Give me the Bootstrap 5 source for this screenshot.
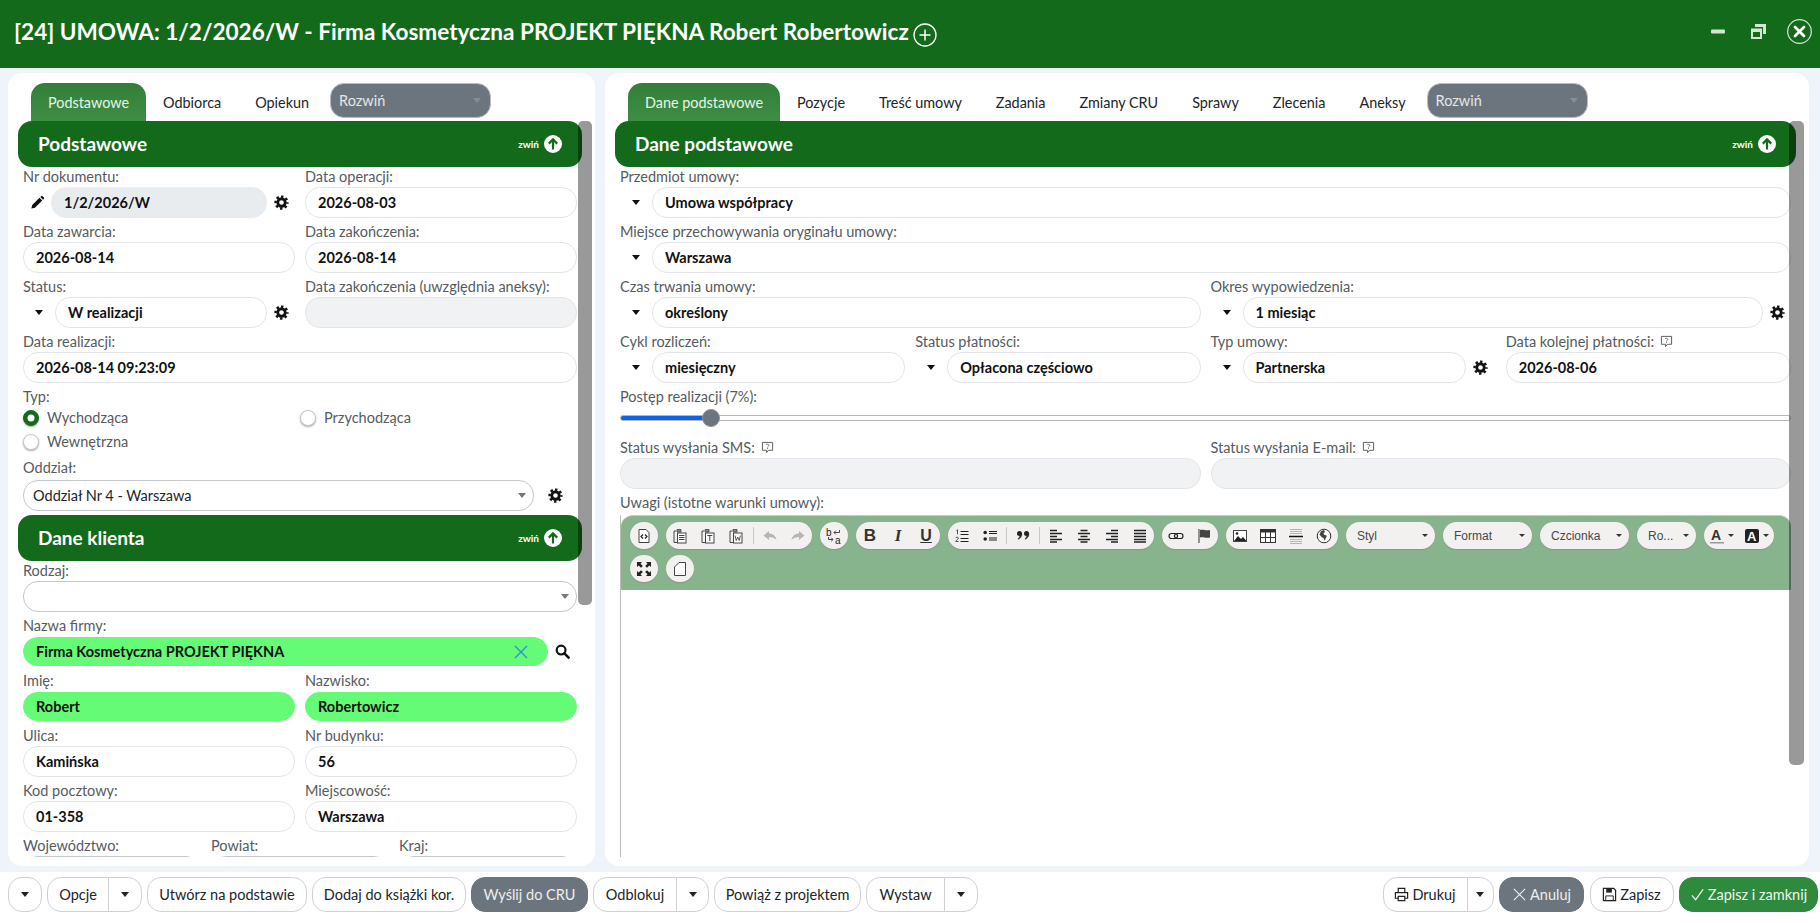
<!DOCTYPE html>
<html lang="pl">
<head>
  <meta charset="UTF-8">
  <title>Umowa 1/2/2026/W</title>
  <link href="https://cdn.jsdelivr.net/npm/bootstrap@5.3.3/dist/css/bootstrap.min.css" rel="stylesheet">
  <style>
    html, body { height: 100%; }
    body {
      font-family: "Lato", "Noto Sans", sans-serif;
      font-size: 14.5px;
      background: #eff4fa;
      color: #212529;
      overflow: hidden;
    }
    .app-shell { height: 923px; }

    /* naglowek okna */
    .win-head { height: 68px; background: #136a1b; color: #fff; padding: 0 8px 0 14px; }
    .win-title { font-size: 22.55px; font-weight: 700; margin: 0 0 4px; line-height: 1; }
    .win-add { width: 24px; height: 24px; margin-left: 4px; margin-top: 1px; }
    .win-ctl { color: #d5e6d6; margin-bottom: 6px; }
    .win-gap-a { margin-left: 26px; }
    .win-gap-b { margin-left: 21px; }

    /* panele */
    .work-area { height: 804px; padding: 5px 11px 6px 8px; gap: 10px; }
    .side-panel { background: #fff; border-radius: 14px; padding: 10px 13px 9px 10px; position: relative; min-width: 0; }
    .panel-left { width: 587px; flex: none; }
    .panel-right { flex: 1 1 auto; }
    .fake-scroll { position: absolute; top: 48px; width: 14px; right: 3px; background: rgba(0,0,0,.4); border-radius: 5px; z-index: 3; }
    .panel-left .fake-scroll { height: 484px; }
    .panel-right .fake-scroll { height: 644px; right: 5px; width: 15px; }

    .tab-strip { height: 38px; flex: none; border: 0; padding-left: 13px; flex-wrap: nowrap; font-size: 14.4px; }
    .tab-strip .nav-link { color: #212529; border: 0; padding: 0 17px; height: 38px; line-height: 40px; border-radius: 14px 14px 0 0; }
    .tab-strip .nav-link.active { background: linear-gradient(#337f39, #3f8d45); color: #e9f3ea; }
    .tab-more {
      width: 161px; height: 35px; margin-left: 4px; border-radius: 14px; background-color: #6c757d; color: #e4e6e8;
      border: 1px solid #b9bcc0; padding: 0 8px; font-size: 14.5px; line-height: 28px;
      background-image: url("data:image/svg+xml,%3csvg xmlns='http://www.w3.org/2000/svg' viewBox='0 0 8 5'%3e%3cpath fill='%23868c92' d='M0 0h8L4 5z'/%3e%3c/svg%3e");
      background-size: 8px 5px; background-position: right 9px center;
    }
    .panel-body { min-height: 0; overflow: hidden; }

    .sect-head { height: 46px; flex: none; background: #136a1b; color: #fff; border-radius: 14px; padding: 0 20px; }
    .sect-head h2 { font-size: 19px; font-weight: 700; margin: 0; }
    .sect-fold { font-size: 10px; font-weight: 700; }
    .sect-fold svg { width: 18px; height: 18px; margin-left: 5px; }

    /* pola */
    .form-pad { padding: 0 5px; }
    .frm-row { --bs-gutter-x: 10px; --bs-gutter-y: 4px; }
    .fld-lbl { display: block; height: 20px; line-height: 20px; margin: 0; color: #555b60; white-space: nowrap; }
    .fld-lbl svg { width: 13px; height: 13px; margin-left: 2px; vertical-align: -1px; }
    .fld-in {
      height: 31px; min-height: 0; border-radius: 15px; border-color: #e3e5e8; font-weight: 700; color: #111;
      font-size: 14.5px; padding: 0 12px; min-width: 0;
    }
    .fld-in:disabled { background: #f1f2f4; }
    .fld-in.is-locked { background: #e9ecef; border-color: #e9ecef; }
    .fld-in.is-hit { background: #65fb76; border-color: #65fb76; height: 29px; margin: 1px 0; }
    .fld-sel {
      height: 31px; border-radius: 15px; border-color: #c4c7ca; font-size: 14.5px; color: #212529; padding: 0 20px 0 9px;
      background-image: url("data:image/svg+xml,%3csvg xmlns='http://www.w3.org/2000/svg' viewBox='0 0 8 5'%3e%3cpath fill='%23777' d='M0 0h8L4 5z'/%3e%3c/svg%3e");
      background-size: 8px 5px; background-position: right 7px center;
    }
    .pre-btn { width: 32px; flex: none; display: flex; justify-content: center; color: #111; }
    .pre-short { width: 28px; }
    .post-btn { width: 28px; flex: none; display: flex; justify-content: center; color: #111; }
    .post-30 { width: 30px; }
    .post-wide { width: 43px; }
    .post-wide.is-search { width: 29px; }
    .tri { width: 0; height: 0; border-left: 4px solid transparent; border-right: 4px solid transparent; border-top: 5px solid currentColor; }
    .ico-15 { width: 15px; height: 15px; }
    .hit-wrap { position: relative; flex: 1 1 auto; min-width: 0; }
    .hit-x { position: absolute; right: 20px; top: 9px; width: 14px; height: 14px; }

    .radio-wrap { margin-top: -1px; }
    .radio-row { color: #555b60; height: 24px; margin: 0; padding-left: 24px; min-height: 0; line-height: 24px; }
    .radio-row .form-check-input { width: 16px; height: 16px; margin: 4px 0 0 -24px; border: 1px solid #c8c8c8; box-shadow: 0 1px 2px #aaa; }
    .radio-row .form-check-input:checked { background-color: #136a1b; border-color: #136a1b; }
    .sel-drop { margin-top: 2px; }

    .range-box { height: 27px; padding-top: 1px; }
    .prog-range { height: 20px; display: block; }
    .prog-range::-webkit-slider-runnable-track { height: 6px; border: 1px solid #b5b5b5; border-radius: 3px; background: linear-gradient(90deg, #0d62e0 7.6%, #fff 7.6%); }
    .prog-range::-webkit-slider-thumb { width: 18px; height: 18px; margin-top: -7px; background: #6c757d; border: 1px solid #8b9197; }

    /* edytor */
    .editor-box { margin-top: 2px; border-left: 1px solid #bbb; flex: 1 1 auto; min-height: 0; }
    .ed-bar {
      background: #88b48d; border-top: 1px solid #c9c9c9; border-top-right-radius: 12px; border-top-left-radius: 12px;
      height: 75px; padding: 6px 9px; gap: 6px 8px;
    }
    .tb-grp { height: 27px; background: #f2f1f0; border-radius: 14px; box-shadow: 0 1px 1px #8b948c; color: #333; }
    .tb-btn { width: 28px; height: 27px; display: flex; align-items: center; justify-content: center; }
    .tb-btn svg { width: 16px; height: 16px; }
    .tb-sep { width: 1px; height: 17px; background: #c8c8c8; margin: 0 2.5px; }
    .tb-sep-sm { margin: 0 2px; }
    .tb-tx { font-family: "Liberation Sans", Arial, sans-serif; font-weight: 700; font-size: 17px; }
    .tb-serif { font-family: "Liberation Serif", serif; font-style: italic; font-size: 17px; }
    .tb-u { text-decoration: underline; font-size: 16px; }
    .tb-combo { height: 27px; background: #f2f1f0; border-radius: 14px; box-shadow: 0 1px 1px #8b948c; font-family: "Liberation Sans", Arial, sans-serif; font-size: 12px; color: #484848; padding: 0 7px 0 11px; }
    .combo-wide { width: 89px; }
    .combo-narrow { width: 59px; }
    .tb-combo .tri { border-left-width: 3px; border-right-width: 3px; border-top-width: 3px; color: #333; }
    .tb-color { width: 35px; height: 27px; display: flex; align-items: center; justify-content: center; gap: 3px; }
    .tb-color svg { width: 16px; height: 16px; }
    .tb-color .tri { border-left-width: 3px; border-right-width: 3px; border-top-width: 3px; }

    /* stopka */
    .foot-bar { height: 51px; background: #fff; padding: 5px 2px 0 8px; gap: 5px; }
    .foot-right { gap: 5.5px; }
    .foot-btn {
      height: 35px; border-radius: 14px; background: #fff; border: 1px solid #cfd1d3; color: #212529;
      font-size: 14.5px; padding: 0; display: inline-flex; align-items: center; justify-content: center; flex: none;
    }
    .foot-btn svg { width: 15px; height: 15px; margin-right: 3px; }
    .foot-grp { flex: none; }
    .foot-grp .foot-btn:first-child { border-radius: 14px 0 0 14px; }
    .foot-grp .foot-btn:last-child { border-radius: 0 14px 14px 0; }
    .foot-btn.is-gray { background: #6c757d; border-color: #6c757d; color: #eceeef; }
    .foot-btn.is-green { background: #2e8a3c; border-color: #2e8a3c; color: #eef6ef; }
    .w-34 { width: 34px; } .w-33 { width: 33px; } .w-27 { width: 27px; }
    .w-62 { width: 62px; } .w-84 { width: 84px; } .w-79 { width: 79px; } .w-85 { width: 85px; }
    .w-160 { width: 160px; } .w-154 { width: 154px; } .w-117 { width: 117px; } .w-147 { width: 147px; }
    .w-139 { width: 139px; }
  </style>
</head>
<body>

  <!-- ikony -->
  <svg width="0" height="0" class="position-absolute">
    <symbol id="i-gear" viewBox="0 0 16 16">
      <circle cx="8" cy="8" r="6.300" fill="none" stroke="currentColor" stroke-width="2.600" stroke-dasharray="2.600 2.350" stroke-dashoffset="1.300"/>
      <circle cx="8" cy="8" r="4" fill="none" stroke="currentColor" stroke-width="3"/>
    </symbol>
    <symbol id="i-pencil" viewBox="0 0 16 16">
      <path fill="currentColor" d="M1.500 14.500l.9-3.800 7.700-7.700 2.900 2.900-7.700 7.700z"/>
      <path fill="currentColor" d="M11 2.100l.9-.9a1.100 1.100 0 0 1 1.500 0l1.400 1.400a1.100 1.100 0 0 1 0 1.500l-.9.9z"/>
    </symbol>
    <symbol id="i-search" viewBox="0 0 16 16">
      <circle cx="6.500" cy="6.500" r="4.700" fill="none" stroke="currentColor" stroke-width="2.300"/>
      <path d="M10 10l4.500 4.500" stroke="currentColor" stroke-width="2.800" stroke-linecap="round"/>
    </symbol>
    <symbol id="i-up" viewBox="0 0 18 18">
      <circle cx="9" cy="9" r="9" fill="#fff"/>
      <path d="M9 14.500V4.500M4.800 8.600L9 4.400l4.200 4.200" fill="none" stroke="#136a1b" stroke-width="2.200"/>
    </symbol>
    <symbol id="i-note" viewBox="0 0 14 14">
      <path d="M1.500 1.500h11v8.500H8L6 12.500V10H1.500z" fill="none" stroke="#555" stroke-width="1"/>
      <path d="M5.500 4.200C6 3.200 8.400 3.400 8.400 4.700 8.400 5.800 7 5.600 7 6.900M7 7.700v1" fill="none" stroke="#555" stroke-width=".9"/>
    </symbol>
    <symbol id="e-paste-base" viewBox="0 0 16 16">
      <path d="M4 3H2v11.500h3" fill="none" stroke="#444"/>
      <path d="M5 1.500h4v2.500H5z" fill="#888" stroke="#444" stroke-width=".8"/>
      <rect x="5.500" y="5" width="8.500" height="10" fill="#fff" stroke="#444"/>
    </symbol>
  </svg>

  <div class="app-shell d-flex flex-column">

    <!-- Naglowek -->
    <header class="win-head d-flex align-items-center">
      <h1 class="win-title">[24] UMOWA: 1/2/2026/W - Firma Kosmetyczna PROJEKT PIĘKNA Robert Robertowicz</h1>
      <svg class="win-add" viewBox="0 0 24 24"><circle cx="12" cy="12" r="11" fill="none" stroke="#fff" stroke-width="1.300"/><path d="M12 6.500v11M6.500 12h11" stroke="#fff" stroke-width="1.500"/></svg>
      <div class="ms-auto d-flex align-items-center">
        <svg class="win-ctl" width="14" height="5" viewBox="0 0 14 5"><rect width="14" height="4" y=".5" rx="1" fill="currentColor"/></svg>
        <svg class="win-ctl win-gap-a" width="15" height="15" viewBox="0 0 15 15"><path fill="currentColor" d="M4 0h11v10h-3V3H4z"/><path fill="currentColor" fill-rule="evenodd" d="M0 4.500h11V15H0zM2 8v5h7V8z"/></svg>
        <svg class="win-ctl win-gap-b" width="25" height="25" viewBox="0 0 25 25"><circle cx="12.500" cy="12.500" r="11.800" fill="none" stroke="currentColor" stroke-width="1.200"/><path d="M8 8l9 9M17 8l-9 9" stroke="#fff" stroke-width="2.800" stroke-linecap="round"/></svg>
      </div>
    </header>

    <main class="work-area d-flex">

      <!-- Lewy panel -->
      <section class="side-panel panel-left d-flex flex-column">
        <div class="fake-scroll"></div>
        <ul class="nav tab-strip align-items-start">
          <li class="nav-item"><a class="nav-link active" href="#">Podstawowe</a></li>
          <li class="nav-item"><a class="nav-link" href="#">Odbiorca</a></li>
          <li class="nav-item"><a class="nav-link" href="#">Opiekun</a></li>
          <li class="nav-item"><select class="form-select tab-more"><option>Rozwiń</option></select></li>
        </ul>
        <div class="panel-body flex-grow-1">
          <div class="sect-head d-flex align-items-center justify-content-between">
            <h2>Podstawowe</h2>
            <span class="sect-fold d-flex align-items-center">zwiń<svg><use href="#i-up"/></svg></span>
          </div>
          <div class="form-pad">
            <div class="row frm-row">
              <div class="col-6">
                <label class="fld-lbl">Nr dokumentu:</label>
                <div class="d-flex align-items-center">
                  <span class="pre-btn pre-short"><svg class="ico-15"><use href="#i-pencil"/></svg></span>
                  <input class="form-control fld-in is-locked" value="1/2/2026/W" readonly>
                  <span class="post-btn"><svg class="ico-15"><use href="#i-gear"/></svg></span>
                </div>
              </div>
              <div class="col-6"><label class="fld-lbl">Data operacji:</label><input class="form-control fld-in" value="2026-08-03"></div>
              <div class="col-6"><label class="fld-lbl">Data zawarcia:</label><input class="form-control fld-in" value="2026-08-14"></div>
              <div class="col-6"><label class="fld-lbl">Data zakończenia:</label><input class="form-control fld-in" value="2026-08-14"></div>
              <div class="col-6">
                <label class="fld-lbl">Status:</label>
                <div class="d-flex align-items-center">
                  <span class="pre-btn"><span class="tri"></span></span>
                  <input class="form-control fld-in" value="W realizacji">
                  <span class="post-btn"><svg class="ico-15"><use href="#i-gear"/></svg></span>
                </div>
              </div>
              <div class="col-6"><label class="fld-lbl">Data zakończenia (uwzględnia aneksy):</label><input class="form-control fld-in" disabled></div>
              <div class="col-12"><label class="fld-lbl">Data realizacji:</label><input class="form-control fld-in" value="2026-08-14 09:23:09"></div>
              <div class="col-12">
                <label class="fld-lbl">Typ:</label>
                <div class="row g-0 radio-wrap">
                  <div class="col-6"><div class="form-check radio-row"><input class="form-check-input" type="radio" name="typ" checked><label class="form-check-label">Wychodząca</label></div></div>
                  <div class="col-6"><div class="form-check radio-row"><input class="form-check-input" type="radio" name="typ"><label class="form-check-label">Przychodząca</label></div></div>
                  <div class="col-6"><div class="form-check radio-row"><input class="form-check-input" type="radio" name="typ"><label class="form-check-label">Wewnętrzna</label></div></div>
                </div>
              </div>
              <div class="col-12">
                <label class="fld-lbl">Oddział:</label>
                <div class="d-flex align-items-center sel-drop">
                  <select class="form-select fld-sel"><option>Oddział Nr 4 - Warszawa</option></select>
                  <span class="post-btn post-wide"><svg class="ico-15"><use href="#i-gear"/></svg></span>
                </div>
              </div>
            </div>
          </div>
          <div class="sect-head d-flex align-items-center justify-content-between mt-1">
            <h2>Dane klienta</h2>
            <span class="sect-fold d-flex align-items-center">zwiń<svg><use href="#i-up"/></svg></span>
          </div>
          <div class="form-pad">
            <div class="row frm-row">
              <div class="col-12"><label class="fld-lbl">Rodzaj:</label><select class="form-select fld-sel"><option></option></select></div>
              <div class="col-12">
                <label class="fld-lbl">Nazwa firmy:</label>
                <div class="d-flex align-items-center">
                  <div class="hit-wrap">
                    <input class="form-control fld-in is-hit" value="Firma Kosmetyczna PROJEKT PIĘKNA">
                    <svg class="hit-x" viewBox="0 0 14 14"><path d="M1 1l12 12M13 1L1 13" stroke="#2b8fd6" stroke-width="1.300"/></svg>
                  </div>
                  <span class="post-btn post-wide is-search"><svg class="ico-15"><use href="#i-search"/></svg></span>
                </div>
              </div>
              <div class="col-6"><label class="fld-lbl">Imię:</label><input class="form-control fld-in is-hit" value="Robert"></div>
              <div class="col-6"><label class="fld-lbl">Nazwisko:</label><input class="form-control fld-in is-hit" value="Robertowicz"></div>
              <div class="col-6"><label class="fld-lbl">Ulica:</label><input class="form-control fld-in" value="Kamińska"></div>
              <div class="col-6"><label class="fld-lbl">Nr budynku:</label><input class="form-control fld-in" value="56"></div>
              <div class="col-6"><label class="fld-lbl">Kod pocztowy:</label><input class="form-control fld-in" value="01-358"></div>
              <div class="col-6"><label class="fld-lbl">Miejscowość:</label><input class="form-control fld-in" value="Warszawa"></div>
              <div class="col-4"><label class="fld-lbl">Województwo:</label><select class="form-select fld-sel"><option></option></select></div>
              <div class="col-4"><label class="fld-lbl">Powiat:</label><select class="form-select fld-sel"><option></option></select></div>
              <div class="col-4"><label class="fld-lbl">Kraj:</label><select class="form-select fld-sel"><option></option></select></div>
            </div>
          </div>
        </div>
      </section>

      <!-- Prawy panel -->
      <section class="side-panel panel-right d-flex flex-column">
        <div class="fake-scroll"></div>
        <ul class="nav tab-strip align-items-start">
          <li class="nav-item"><a class="nav-link active" href="#">Dane podstawowe</a></li>
          <li class="nav-item"><a class="nav-link" href="#">Pozycje</a></li>
          <li class="nav-item"><a class="nav-link" href="#">Treść umowy</a></li>
          <li class="nav-item"><a class="nav-link" href="#">Zadania</a></li>
          <li class="nav-item"><a class="nav-link" href="#">Zmiany CRU</a></li>
          <li class="nav-item"><a class="nav-link" href="#">Sprawy</a></li>
          <li class="nav-item"><a class="nav-link" href="#">Zlecenia</a></li>
          <li class="nav-item"><a class="nav-link" href="#">Aneksy</a></li>
          <li class="nav-item"><select class="form-select tab-more"><option>Rozwiń</option></select></li>
        </ul>
        <div class="panel-body flex-grow-1 d-flex flex-column">
          <div class="sect-head d-flex align-items-center justify-content-between">
            <h2>Dane podstawowe</h2>
            <span class="sect-fold d-flex align-items-center">zwiń<svg><use href="#i-up"/></svg></span>
          </div>
          <div class="form-pad flex-grow-1 d-flex flex-column overflow-hidden">
            <div class="row frm-row">
              <div class="col-12">
                <label class="fld-lbl">Przedmiot umowy:</label>
                <div class="d-flex align-items-center"><span class="pre-btn"><span class="tri"></span></span><input class="form-control fld-in" value="Umowa współpracy"></div>
              </div>
              <div class="col-12">
                <label class="fld-lbl">Miejsce przechowywania oryginału umowy:</label>
                <div class="d-flex align-items-center"><span class="pre-btn"><span class="tri"></span></span><input class="form-control fld-in" value="Warszawa"></div>
              </div>
              <div class="col-6">
                <label class="fld-lbl">Czas trwania umowy:</label>
                <div class="d-flex align-items-center"><span class="pre-btn"><span class="tri"></span></span><input class="form-control fld-in" value="określony"></div>
              </div>
              <div class="col-6">
                <label class="fld-lbl">Okres wypowiedzenia:</label>
                <div class="d-flex align-items-center"><span class="pre-btn"><span class="tri"></span></span><input class="form-control fld-in" value="1 miesiąc"><span class="post-btn"><svg class="ico-15"><use href="#i-gear"/></svg></span></div>
              </div>
              <div class="col-3">
                <label class="fld-lbl">Cykl rozliczeń:</label>
                <div class="d-flex align-items-center"><span class="pre-btn"><span class="tri"></span></span><input class="form-control fld-in" value="miesięczny"></div>
              </div>
              <div class="col-3">
                <label class="fld-lbl">Status płatności:</label>
                <div class="d-flex align-items-center"><span class="pre-btn"><span class="tri"></span></span><input class="form-control fld-in" value="Opłacona częściowo"></div>
              </div>
              <div class="col-3">
                <label class="fld-lbl">Typ umowy:</label>
                <div class="d-flex align-items-center"><span class="pre-btn"><span class="tri"></span></span><input class="form-control fld-in" value="Partnerska"><span class="post-btn post-30"><svg class="ico-15"><use href="#i-gear"/></svg></span></div>
              </div>
              <div class="col-3">
                <label class="fld-lbl">Data kolejnej płatności: <svg><use href="#i-note"/></svg></label>
                <input class="form-control fld-in" value="2026-08-06">
              </div>
              <div class="col-12">
                <label class="fld-lbl">Postęp realizacji (7%):</label>
                <div class="range-box"><input type="range" class="form-range prog-range" min="0" max="100" value="7"></div>
              </div>
              <div class="col-6"><label class="fld-lbl">Status wysłania SMS: <svg><use href="#i-note"/></svg></label><input class="form-control fld-in" disabled></div>
              <div class="col-6"><label class="fld-lbl">Status wysłania E-mail: <svg><use href="#i-note"/></svg></label><input class="form-control fld-in" disabled></div>
              <div class="col-12"><label class="fld-lbl">Uwagi (istotne warunki umowy):</label></div>
            </div>

            <div class="editor-box">
              <div class="ed-bar d-flex flex-wrap align-content-start">
                <div class="tb-grp d-flex align-items-center">
                  <span class="tb-btn"><svg viewBox="0 0 16 16"><path d="M3 1.500h7l3 3v10H3z" fill="#fff" stroke="#444"/><path d="M7 6.500L5 8.500l2 2M9 6.500l2 2-2 2" fill="none" stroke="#222" stroke-width="1.200"/></svg></span>
                </div>
                <div class="tb-grp d-flex align-items-center">
                  <span class="tb-btn"><svg viewBox="0 0 16 16"><use href="#e-paste-base"/><path d="M7 7.500h5.500M7 9.500h5.500M7 11.500h5.500" stroke="#444"/></svg></span>
                  <span class="tb-btn"><svg viewBox="0 0 16 16"><use href="#e-paste-base"/><path d="M7.300 7.500h5M9.800 7.500v5.500" stroke="#444"/></svg></span>
                  <span class="tb-btn"><svg viewBox="0 0 16 16"><use href="#e-paste-base"/><path d="M7 7.500l1.200 5 1.500-3.500 1.500 3.500 1.200-5" fill="none" stroke="#444" stroke-width=".9"/></svg></span>
                  <span class="tb-sep"></span>
                  <span class="tb-btn"><svg viewBox="0 0 16 16"><path fill="#b5b5b5" d="M7 3L1.500 7.500 7 12V9c3.200 0 5.300.7 7.500 3-.8-4-3.500-6.500-7.500-6.500z"/></svg></span>
                  <span class="tb-btn"><svg viewBox="0 0 16 16"><path fill="#b5b5b5" d="M9 3l5.500 4.500L9 12V9c-3.200 0-5.300.7-7.500 3 .8-4 3.500-6.500 7.500-6.500z"/></svg></span>
                </div>
                <div class="tb-grp d-flex align-items-center">
                  <span class="tb-btn"><svg viewBox="0 0 16 16"><text x="0" y="8" font-size="10" font-family="Liberation Sans" fill="#222">b</text><text x="9" y="15.500" font-size="10" font-family="Liberation Sans" fill="#222">a</text><path d="M8 4.500h5.500V2M9.800 2.700L8 4.500l1.800 1.800M7 11.500H2.500V9M5.200 9.700L7 11.500l-1.800 1.800" fill="none" stroke="#333" stroke-width=".9"/></svg></span>
                </div>
                <div class="tb-grp d-flex align-items-center">
                  <span class="tb-btn tb-tx">B</span>
                  <span class="tb-btn tb-tx tb-serif">I</span>
                  <span class="tb-btn tb-tx tb-u">U</span>
                </div>
                <div class="tb-grp d-flex align-items-center">
                  <span class="tb-btn"><svg viewBox="0 0 16 16"><path d="M6.500 3.500h8M6.500 6.500h8M6.500 10.500h8M6.500 13.500h8" stroke="#222" stroke-width="1.100"/><path d="M2.500 2.500l1-.7v4.500M1.800 10c.5-1.200 2.700-1 2.500.3-.1.800-2.400 2.200-2.500 3.200h2.700" fill="none" stroke="#222" stroke-width=".8"/></svg></span>
                  <span class="tb-btn"><svg viewBox="0 0 16 16"><circle cx="3.200" cy="4.500" r="1.800" fill="#222"/><circle cx="3.200" cy="11" r="1.800" fill="#222"/><path d="M7 3.500h8M7 5.500h8M7 10h8M7 12h8" stroke="#222" stroke-width="1.100"/></svg></span>
                  <span class="tb-sep tb-sep-sm"></span>
                  <span class="tb-btn"><svg viewBox="0 0 16 16"><circle cx="4.500" cy="5.500" r="2.500" fill="#222"/><path d="M6.900 5.500c0 3-1.400 4.700-3.400 5.800l-.4-.7c1-.7 1.500-1.400 1.800-2.600" fill="#222" stroke="#222" stroke-width=".5"/><circle cx="11.500" cy="5.500" r="2.500" fill="#222"/><path d="M13.900 5.500c0 3-1.400 4.700-3.400 5.800l-.4-.7c1-.7 1.500-1.400 1.800-2.600" fill="#222" stroke="#222" stroke-width=".5"/></svg></span>
                  <span class="tb-sep tb-sep-sm"></span>
                  <span class="tb-btn"><svg viewBox="0 0 16 16"><path d="M2 2.500h7M2 5.500h12M2 8.500h7M2 11.500h12M2 14h7" stroke="#222" stroke-width="1.300"/></svg></span>
                  <span class="tb-btn"><svg viewBox="0 0 16 16"><path d="M4.500 2.500h7M2 5.500h12M4.500 8.500h7M2 11.500h12M4.500 14h7" stroke="#222" stroke-width="1.300"/></svg></span>
                  <span class="tb-btn"><svg viewBox="0 0 16 16"><path d="M7 2.500h7M2 5.500h12M7 8.500h7M2 11.500h12M7 14h7" stroke="#222" stroke-width="1.300"/></svg></span>
                  <span class="tb-btn"><svg viewBox="0 0 16 16"><path d="M2 2.500h12M2 5.500h12M2 8.500h12M2 11.500h12M2 14h12" stroke="#222" stroke-width="1.300"/></svg></span>
                </div>
                <div class="tb-grp d-flex align-items-center">
                  <span class="tb-btn"><svg viewBox="0 0 16 16"><rect x="1" y="5.500" width="8.500" height="5" rx="2.500" fill="none" stroke="#222" stroke-width="1.200"/><rect x="6.500" y="5.500" width="8.500" height="5" rx="2.500" fill="none" stroke="#222" stroke-width="1.200"/></svg></span>
                  <span class="tb-btn"><svg viewBox="0 0 16 16"><path d="M3 1v14" stroke="#333"/><path fill="#444" d="M4 2c3-1.200 5 1 10 0v7.500c-5 1-7-1.200-10 0z"/></svg></span>
                </div>
                <div class="tb-grp d-flex align-items-center">
                  <span class="tb-btn"><svg viewBox="0 0 16 16"><rect x="1.500" y="2.500" width="13" height="11" fill="#fff" stroke="#444"/><path fill="#222" d="M2 13l4-5 3 3 2-2 3.500 4z"/><circle cx="5" cy="5.500" r="1.300" fill="#222"/></svg></span>
                  <span class="tb-btn"><svg viewBox="0 0 16 16"><rect x=".5" y="1.500" width="15" height="13" fill="#fff" stroke="#333"/><rect x="1" y="1.500" width="14" height="3" fill="#333"/><path d="M.5 9.500h15M5.500 4v10M10.500 4v10" stroke="#333"/></svg></span>
                  <span class="tb-btn"><svg viewBox="0 0 16 16"><path d="M2 1.500h12M2 3.500h12M2 5.500h12M2 11.500h12M2 13.500h12M2 15.500h12" stroke="#999" stroke-width=".7"/><path d="M1 8.500h14" stroke="#111" stroke-width="1.500"/></svg></span>
                  <span class="tb-btn"><svg viewBox="0 0 16 16"><circle cx="8" cy="8" r="6.800" fill="#fff" stroke="#333"/><path fill="#444" d="M5 3l3-1 1 2-1.500 1 .7 1.800 2.800 1-1.300 2.500-.9 2.700-1-2.700L5.500 9 3.500 6.500z"/></svg></span>
                </div>
                <div class="tb-combo combo-wide d-flex align-items-center justify-content-between"><span>Styl</span><span class="tri"></span></div>
                <div class="tb-combo combo-wide d-flex align-items-center justify-content-between"><span>Format</span><span class="tri"></span></div>
                <div class="tb-combo combo-wide d-flex align-items-center justify-content-between"><span>Czcionka</span><span class="tri"></span></div>
                <div class="tb-combo combo-narrow d-flex align-items-center justify-content-between"><span>Ro...</span><span class="tri"></span></div>
                <div class="tb-grp d-flex align-items-center">
                  <span class="tb-color"><svg viewBox="0 0 16 16"><text x="2" y="12" font-size="14" font-weight="700" font-family="Liberation Sans" fill="#333">A</text><rect x="1" y="14" width="14" height="1.500" fill="#999"/></svg><span class="tri"></span></span>
                  <span class="tb-color"><svg viewBox="0 0 16 16"><rect x="1" y="1" width="14" height="14" rx="2" fill="#222"/><text x="3" y="13" font-size="13" font-weight="700" font-family="Liberation Sans" fill="#fff">A</text></svg><span class="tri"></span></span>
                </div>
                <div class="tb-grp d-flex align-items-center">
                  <span class="tb-btn"><svg viewBox="0 0 16 16"><path fill="#222" d="M1 1h5L4.500 2.700 6.800 5 5 6.800 2.700 4.500 1 6zM15 1v5l-1.700-1.500L11 6.800 9.200 5l2.300-2.300L10 1zM1 15v-5l1.700 1.500L5 9.200 6.800 11l-2.300 2.300L6 15zM15 15h-5l1.500-1.700L9.200 11 11 9.200l2.300 2.300L15 10z"/></svg></span>
                </div>
                <div class="tb-grp d-flex align-items-center">
                  <span class="tb-btn"><svg viewBox="0 0 16 16"><path d="M7 1.500h6.500v13h-11V6z" fill="#fff" stroke="#444"/></svg></span>
                </div>
              </div>
            </div>
          </div>
        </div>
      </section>
    </main>

    <!-- Stopka -->
    <footer class="foot-bar d-flex">
      <button class="btn foot-btn w-34"><span class="tri"></span></button>
      <div class="btn-group foot-grp">
        <button class="btn foot-btn w-62">Opcje</button>
        <button class="btn foot-btn w-34"><span class="tri"></span></button>
      </div>
      <button class="btn foot-btn w-160">Utwórz na podstawie</button>
      <button class="btn foot-btn w-154">Dodaj do książki kor.</button>
      <button class="btn foot-btn is-gray w-117">Wyślij do CRU</button>
      <div class="btn-group foot-grp">
        <button class="btn foot-btn w-84">Odblokuj</button>
        <button class="btn foot-btn w-33"><span class="tri"></span></button>
      </div>
      <button class="btn foot-btn w-147">Powiąż z projektem</button>
      <div class="btn-group foot-grp">
        <button class="btn foot-btn w-79">Wystaw</button>
        <button class="btn foot-btn w-34"><span class="tri"></span></button>
      </div>
      <div class="ms-auto d-flex foot-right">
        <div class="btn-group foot-grp">
          <button class="btn foot-btn w-85"><svg viewBox="0 0 16 16"><path d="M4.500 6V1.500h7V6M4.500 12H1.500V6h13v6h-3M4.500 10h7v4.500h-7z" fill="none" stroke="#222" stroke-width="1.300"/></svg>Drukuj</button>
          <button class="btn foot-btn w-27"><span class="tri"></span></button>
        </div>
        <button class="btn foot-btn is-gray w-85"><svg viewBox="0 0 16 16"><path d="M2 2l12 12M14 2L2 14" stroke="#eceeef" stroke-width="1.200"/></svg>Anuluj</button>
        <button class="btn foot-btn w-84"><svg viewBox="0 0 16 16"><path d="M1.500 1.500h11l2 2v11h-13z" fill="none" stroke="#222" stroke-width="1.300"/><path d="M4.500 2h6v4h-6z" fill="#222"/><path d="M4 9.500h8v5H4z" fill="none" stroke="#222"/></svg>Zapisz</button>
        <button class="btn foot-btn is-green w-139"><svg viewBox="0 0 16 16"><path d="M2 9l4 4.500L14 2.500" fill="none" stroke="#eef6ef" stroke-width="1.300"/></svg>Zapisz i zamknij</button>
      </div>
    </footer>
  </div>

  <script src="https://cdn.jsdelivr.net/npm/bootstrap@5.3.3/dist/js/bootstrap.bundle.min.js"></script>
</body>
</html>
